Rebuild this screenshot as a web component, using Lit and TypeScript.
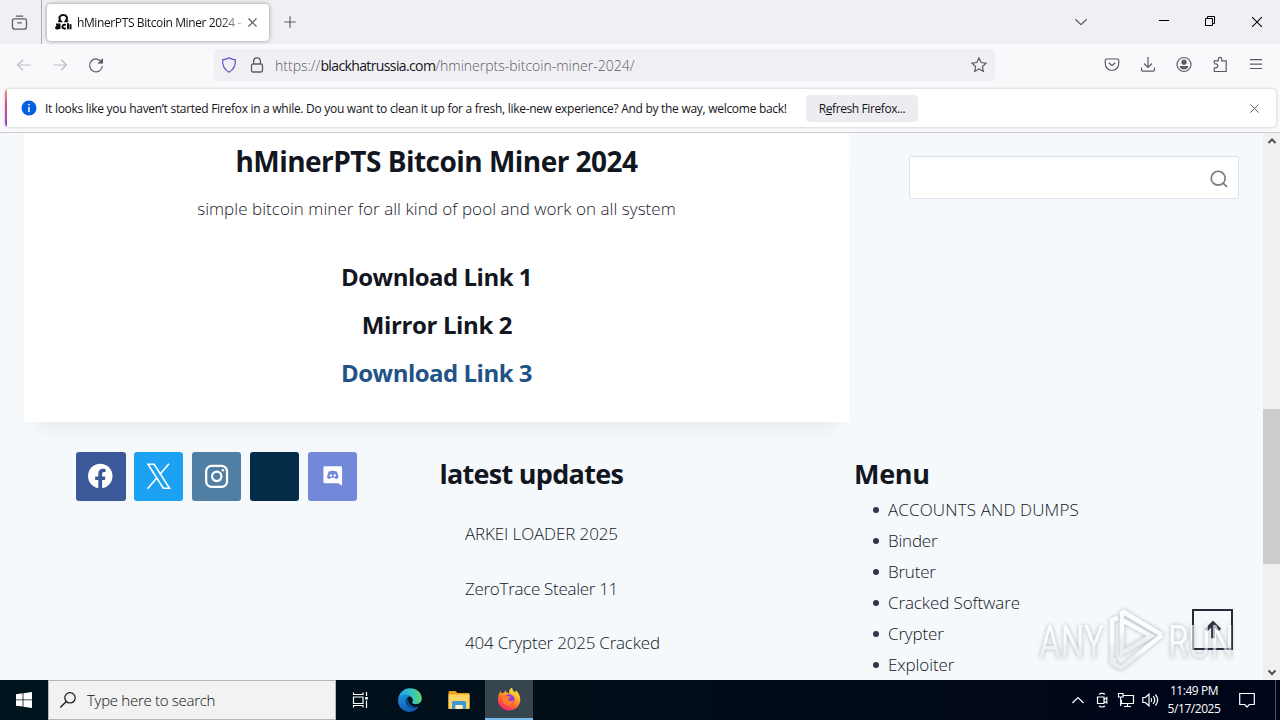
import { LitElement, html, svg, css } from 'lit';
import { customElement, property } from 'lit/decorators.js';

const icons: Record<string, unknown> = {
  view: svg`<path d="M4.5 2h7M3 4.500h10a1.600 1.600 0 0 1 1.600 1.600v5.800a2.300 2.300 0 0 1-2.300 2.300H3.700a2.300 2.300 0 0 1-2.300-2.300V6.100A1.600 1.600 0 0 1 3 4.500zM5.800 8.300h4.400"/>`,
  close: svg`<path d="M3.700 3.700l8.600 8.600M12.300 3.700l-8.600 8.600"/>`,
  plus: svg`<path d="M8 1.500v13M1.500 8h13"/>`,
  chevron: svg`<path d="M2.300 5.300l5.700 5.400 5.700-5.400"/>`,
  minimize: svg`<path d="M3 7.500h10"/>`,
  restore: svg`<path d="M3.500 5.500h7v7h-7zM5.500 5.500v-2h7v7h-2"/>`,
  back: svg`<path d="M1.500 8h13M7 2.700L1.500 8 7 13.300"/>`,
  forward: svg`<path d="M1.500 8h13M9 2.700L14.500 8 9 13.300"/>`,
  reload: svg`<path d="M13.700 5.400A6.400 6.400 0 1 0 14.400 9M14.300 1.800v4.200h-4.200"/><path d="M14.600 1.500v4.800H9.800z" fill="currentColor" stroke="none"/>`,
  shield: svg`<path d="M8 .8C6 2.100 4 2.700 1.600 2.800c-.2 5.400 1.200 9.600 6.400 12.400 5.200-2.800 6.600-7 6.400-12.400C12 2.700 10 2.100 8 .8z"/>`,
  lock: svg`<rect x="2.500" y="7" width="11" height="8" rx="1.500"/><path d="M4.600 7V4.300a3.400 3.400 0 0 1 6.800 0V7"/>`,
  star: svg`<path d="M8 1l2.100 4.500 4.900.6-3.600 3.400.9 4.900L8 12l-4.300 2.400.9-4.900L1 6.100l4.900-.6z"/>`,
  pocket: svg`<path d="M2.500 2h11a1.200 1.200 0 0 1 1.200 1.200v3.600a6.700 6.700 0 0 1-13.400 0V3.200A1.200 1.200 0 0 1 2.500 2zM4.800 5.800L8 8.800l3.200-3"/>`,
  download: svg`<path d="M8 0v10.300M4 6.500l4 4 4-4M1.500 10.500v2a1.700 1.700 0 0 0 1.700 1.700h9.600a1.700 1.700 0 0 0 1.700-1.700v-2"/>`,
  account: svg`<circle cx="8" cy="7.500" r="7"/><circle cx="8" cy="5.200" r="2.600" fill="currentColor" stroke="none"/><path d="M3.700 9h8.600c0 2-1.800 3.500-4.300 3.500S3.700 11 3.700 9z" fill="currentColor" stroke="none"/>`,
  puzzle: svg`<path d="M2.300 6.300V3.800h4V2a1.700 1.700 0 0 1 3.400 0v1.800h4.500v10.700H2.300v-3.700h1.500a1.900 1.900 0 0 0 0-3.900H2.300"/>`,
  menu: svg`<path d="M2 2.700h12M2 7.100h12M2 11.500h12"/>`,
  search: svg`<circle cx="7.300" cy="7.300" r="6.200"/><path d="M11.700 11.700L15 15"/>`,
  lens: svg`<circle cx="10" cy="5.800" r="5.200"/><path d="M6.200 9.500L.3 15.500"/>`,
  up: svg`<path d="M8 14.500V3M2.500 8L8 2.500 13.500 8"/>`,
  scrollUp: svg`<path d="M4.500 10L8 6.500l3.500 3.500"/>`,
  scrollDown: svg`<path d="M4.500 6.500L8 10l3.500-3.500"/>`,
  caret: svg`<path d="M2.500 11L8 5.500l5.500 5.500"/>`,
  camera: svg`<path d="M3.500 5h6.500v6.500H3.500zM10 7.500l2.800-1.800v5.200L10 9.200M5 2.400C6.500 1 9.500 1 11 2.400M5 14c1.500 1.300 4.500 1.300 6 0"/>`,
  network: svg`<path d="M5 3.500h10.500v8H3.500V8M9.500 11.500v3M6 14.500h7M.5 1.500h4.500v3.500H.5zM2.700 5v9"/>`,
  sound: svg`<path d="M.8 5.500h2.500L7 2.200v11.600l-3.700-3.300H.8zM9 6c.9 1.200.9 2.800 0 4M11.200 4.200c1.900 2.300 1.900 5.300 0 7.600M13.400 2.500c2.800 3.400 2.800 7.600 0 11"/>`,
  notes: svg`<path d="M.7 1.500h14.600v11h-5L8 15l-2.300-2.500h-5z"/>`,
  taskview: svg`<path d="M1.500.5v2h9.500v-2M1.500 5h9.500v6.500H1.500zM1.500 15.500v-2h9.500v2M14.500 0v4M14.500 8.500V16"/><path d="M13.200 5h2.600v2.500h-2.600z" fill="currentColor" stroke="none"/>`,
};

@customElement('line-icon')
export class LineIcon extends LitElement {
  @property() name = '';
  @property({ type: Number }) size = 16;
  @property({ type: Number }) weight = 1.2;

  static styles = css`
    :host {
      display: block;
      flex: none;
    }

    svg {
      display: block;
      fill: none;
      stroke: currentColor;
      overflow: visible;
    }
  `;

  render() {
    return html`
      <svg width=${this.size} height=${this.size} viewBox="0 0 16 16" stroke-width=${this.weight}>${icons[this.name]}</svg>
    `;
  }
}

@customElement('browser-chrome')
export class BrowserChrome extends LitElement {
  static styles = css`
    :host {
      display: block;
      height: 133px;
      box-sizing: border-box;
      border-bottom: 1px solid #cccccf;
      background: #f9f9fb;
      font-family: 'Open Sans', 'Noto Sans', sans-serif;
      color: #15141a;
      white-space: nowrap;
    }

    line-icon {
      color: #5b5b66;
    }

    .tabs {
      display: flex;
      align-items: center;
      height: 44px;
      background: #f0f0f4;
    }

    .view {
      display: flex;
      align-items: center;
      width: 42px;
      height: 44px;
      padding-left: 11px;
      box-sizing: border-box;
      border-right: 1px solid #a9a9b0;
    }

    .tab {
      display: flex;
      align-items: center;
      width: 222px;
      height: 37px;
      margin-left: 5px;
      padding: 0 9px 0 8px;
      box-sizing: border-box;
      border-radius: 4px;
      background: #fff;
      box-shadow: 0 0 4px rgba(0, 0, 0, 0.4);
    }

    .favicon {
      display: block;
      width: 17px;
      height: 17px;
      margin-right: 5px;
    }

    .title {
      width: 168px;
      font-size: 12px;
      letter-spacing: -0.39px;
      line-height: 20px;
      padding-top: 1px;
      -webkit-mask-image: linear-gradient(to right, #000 84%, transparent 103%);
    }

    .new {
      margin-left: 14px;
    }

    .spacer {
      flex: 1;
    }

    .window {
      display: flex;
      gap: 30px;
      padding: 0 14px 0 67px;
    }

    .window line-icon {
      color: #000;
    }

    .toolbar {
      display: flex;
      align-items: center;
      height: 42px;
      padding-left: 16px;
    }

    .nav {
      display: flex;
      gap: 20px;
      width: 198px;
    }

    .nav .disabled {
      color: #bcbcc4;
    }

    .url {
      display: flex;
      align-items: center;
      width: 781px;
      height: 32px;
      padding: 0 8px 0 7px;
      box-sizing: border-box;
      border-radius: 4px;
      background: #f0f0f4;
    }

    .url .shield {
      color: #5b55c4;
      margin-right: 12px;
    }

    .address {
      flex: 1;
      padding-left: 10px;
      font-size: 14px;
      font-weight: 300;
      color: #5b5b66;
    }

    .host {
      font-weight: 400;
      letter-spacing: -0.62px;
      color: #15141a;
    }

    .tools {
      display: flex;
      gap: 20px;
      padding-left: 109px;
    }

    .notice {
      display: flex;
      align-items: center;
      width: 1271px;
      height: 38px;
      margin: 3px 0 0 5px;
      padding-right: 14px;
      box-sizing: border-box;
      border-radius: 4px;
      overflow: hidden;
      background: #fff;
      box-shadow: 0 0 3px rgba(0, 0, 0, 0.25);
      font-size: 12px;
    }

    .stripe {
      align-self: stretch;
      width: 2px;
      background: linear-gradient(#f59a5f, #d5468c 45%, #8a4fc6);
    }

    .info {
      display: block;
      width: 16px;
      height: 16px;
      margin: 0 8px 0 14px;
    }

    .message {
      width: 761px;
      letter-spacing: -0.284px;
    }

    .button {
      width: 112px;
      height: 27px;
      border-radius: 4px;
      background: #ededf1;
      letter-spacing: -0.4px;
      line-height: 28px;
      text-align: center;
    }

    u {
      text-underline-offset: 1px;
    }
  `;

  render() {
    return html`
      <div class="tabs">
        <div class="view"><line-icon name="view" size="17"></line-icon></div>
        <div class="tab">
          <svg class="favicon" viewBox="0 0 17 17" fill="none" stroke="#0c0c0d">
            <path d="M3.200 7.300h2.600c-3-3.500-.6-6.300 2.400-6.300s5.400 2.800 2.400 6.300h2.600" stroke-width="2"/>
            <path d="M1 10.500h3.500v4.500M4.500 12.300c-4-.3-4.300 2.500-1.800 2.300l1.800-.7M10.800 11c-4.500-1.500-4.500 4.800 0 3.200M13 9.200v6M15.500 10.200v5" stroke-width="2"/>
          </svg>
          <div class="title">hMinerPTS Bitcoin Miner 2024 -</div>
          <line-icon name="close" size="15" weight="1.300"></line-icon>
        </div>
        <line-icon class="new" name="plus" size="14" weight="1.300"></line-icon>
        <div class="spacer"></div>
        <line-icon name="chevron"></line-icon>
        <div class="window">
          <line-icon name="minimize" weight="1"></line-icon>
          <line-icon name="restore" weight="1"></line-icon>
          <line-icon name="close" size="18" weight="0.900"></line-icon>
        </div>
      </div>
      <div class="toolbar">
        <div class="nav">
          <line-icon class="disabled" name="back"></line-icon>
          <line-icon class="disabled" name="forward"></line-icon>
          <line-icon name="reload"></line-icon>
        </div>
        <div class="url">
          <line-icon class="shield" name="shield"></line-icon>
          <line-icon name="lock" weight="1.300"></line-icon>
          <div class="address">https://<span class="host">blackhatrussia.com</span>/hminerpts-bitcoin-miner-2024/</div>
          <line-icon name="star"></line-icon>
        </div>
        <div class="tools">
          ${['pocket', 'download', 'account', 'puzzle', 'menu'].map(name => html`<line-icon name=${name}></line-icon>`)}
        </div>
      </div>
      <div class="notice">
        <div class="stripe"></div>
        <svg class="info" viewBox="0 0 16 16">
          <circle cx="8" cy="8" r="7.500" fill="#0061e0"/>
          <path d="M8 7v5M8 4v1.500" stroke="#fff" stroke-width="1.500"/>
        </svg>
        <div class="message">It looks like you haven’t started Firefox in a while. Do you want to clean it up for a fresh, like-new experience? And by the way, welcome back!</div>
        <div class="button">R<u>e</u>fresh Firefox...</div>
        <div class="spacer"></div>
        <line-icon name="close" size="15" weight="1"></line-icon>
      </div>
    `;
  }
}

@customElement('site-page')
export class SitePage extends LitElement {
  // [text, letter-spacing]
  private _updates: [string, number][] = [
    ['ARKEI LOADER 2025', -0.12],
    ['ZeroTrace Stealer 11', -0.3],
    ['404 Crypter 2025 Cracked', -0.21],
  ];

  private _menu: [string, number][] = [
    ['ACCOUNTS AND DUMPS', 0.14],
    ['Binder', -0.2],
    ['Bruter', -0.2],
    ['Cracked Software', -0.11],
    ['Crypter', -0.15],
    ['Exploiter', -0.12],
  ];

  static styles = css`
    :host {
      display: flex;
      height: 547px;
      overflow: hidden;
      background: #f5f9fc;
      font-family: 'Open Sans', 'Noto Sans', sans-serif;
      color: #12161f;
      white-space: nowrap;
    }

    .view {
      position: relative;
      width: 1263px;
    }

    .top {
      display: flex;
      align-items: flex-start;
      padding-left: 24px;
    }

    .card {
      width: 825px;
      height: 289px;
      padding-top: 8px;
      box-sizing: border-box;
      background: #fff;
      box-shadow: 0 18px 18px -13px rgba(0, 0, 0, 0.07);
      text-align: center;
    }

    h1,
    h2,
    h3,
    p,
    ul {
      margin: 0;
      padding: 0;
    }

    h1 {
      font-size: 28px;
      letter-spacing: -0.53px;
      line-height: 40px;
    }

    p {
      margin: 13px 0 29px;
      font-size: 17px;
      font-weight: 300;
      letter-spacing: 0.045px;
      line-height: 30px;
      color: #1a202c;
    }

    h2 {
      font-size: 24px;
      letter-spacing: -0.5px;
      line-height: 48px;
    }

    h2.mirror {
      padding-left: 1px;
      letter-spacing: -0.38px;
    }

    h2.link {
      color: #215387;
    }

    .search {
      display: flex;
      align-items: center;
      justify-content: flex-end;
      width: 330px;
      height: 43px;
      margin: 23px 0 0 60px;
      padding: 3px 10px 0 0;
      box-sizing: border-box;
      border: 1px solid #dbe3ec;
      border-radius: 2px;
      background: #fff;
      color: #7b7b80;
    }

    .footer {
      display: grid;
      grid-template-columns: 363.500px 414.500px 1fr;
      padding: 30px 0 0 76px;
    }

    .social {
      display: flex;
      gap: 8.400px;
    }

    .social svg {
      display: block;
      width: 49.500px;
      height: 49px;
      border-radius: 3px;
    }

    .facebook {
      background: #3b5998;
    }

    .x {
      background: #1da1f2;
    }

    .instagram {
      background: #517fa4;
    }

    .steam {
      background: #042b47;
    }

    .discord {
      background: #7289da;
    }

    h3 {
      margin-top: 2px;
      font-size: 27px;
      letter-spacing: -0.72px;
      line-height: 40px;
    }

    h3.short {
      letter-spacing: -0.3px;
    }

    ul {
      list-style: none;
      font-size: 17px;
      font-weight: 300;
    }

    .updates {
      padding: 13px 0 0 25.500px;
      line-height: 54.500px;
    }

    .menu {
      line-height: 31px;
    }

    .menu li {
      display: flex;
      align-items: center;
    }

    .menu li::before {
      content: '';
      width: 6px;
      height: 6px;
      margin: 1px 9px 0 19px;
      border-radius: 50%;
      background: #2d3748;
    }

    .totop {
      position: absolute;
      left: 1192px;
      top: 476px;
      display: flex;
      align-items: center;
      justify-content: center;
      width: 41px;
      height: 41px;
      box-sizing: border-box;
      border: 2px solid #252d3b;
      color: #2d3748;
    }

    .watermark {
      position: absolute;
      left: 1030px;
      top: 467px;
      width: 215px;
      height: 80px;
      overflow: visible;
      font: 400 46px Roboto, 'Open Sans', sans-serif;
      filter: drop-shadow(0 0 2px rgba(60, 70, 80, 0.6));
      opacity: 0.62;
    }

    .scroll {
      display: flex;
      flex-direction: column;
      align-items: center;
      width: 17px;
      background: #f0f0f0;
      color: #505050;
    }

    .track {
      flex: 1;
      width: 17px;
    }

    .thumb {
      height: 155px;
      margin-top: 260px;
      background: #cdcdcd;
    }
  `;

  render() {
    return html`
      <div class="view">
        <div class="top">
          <div class="card">
            <h1>hMinerPTS Bitcoin Miner 2024</h1>
            <p>simple bitcoin miner for all kind of pool and work on all system</p>
            <h2>Download Link 1</h2>
            <h2 class="mirror">Mirror Link 2</h2>
            <h2 class="link">Download Link 3</h2>
          </div>
          <div class="search"><line-icon name="search" size="18" weight="1.500"></line-icon></div>
        </div>
        <div class="footer">
          <div class="social">
            <svg class="facebook" viewBox="0 0 50 50">
              <circle cx="24.500" cy="24.500" r="12.500" fill="#fff"/>
              <path d="M22.500 38V28.500h-3.200v-3.600h3.200v-2.800c0-3.300 2-5 4.900-5 1.300 0 2.500.2 2.500.2v3h-1.500c-1.600 0-2 1-2 1.900v2.700h3.400l-.6 3.600h-2.800V38z" fill="#3b5998"/>
            </svg>
            <svg class="x" viewBox="0 0 50 50" fill="none" stroke="#fff">
              <path d="M14 12.500h6.300L36 37h-6.300z" stroke-width="1.600"/>
              <path d="M35.500 12L26 23M23 26.500L13.500 37.500" stroke-width="1.700"/>
            </svg>
            <svg class="instagram" viewBox="0 0 50 50" fill="none" stroke="#fff" stroke-width="2.300">
              <rect x="14.200" y="14.200" width="21.300" height="21.300" rx="5.500"/>
              <circle cx="25" cy="24.800" r="4.800"/>
              <circle cx="31.300" cy="18.700" r="1.300" fill="#fff" stroke="none"/>
            </svg>
            <svg class="steam" viewBox="0 0 50 50"></svg>
            <svg class="discord" viewBox="0 0 50 50">
              <path d="M17 14.500h16a1.500 1.500 0 0 1 1.500 1.500v18.500l-3.800-2.500H17a1.500 1.500 0 0 1-1.500-1.500V16a1.500 1.500 0 0 1 1.500-1.500z" fill="#fff"/>
              <path d="M21 20c2.500-1 5.500-1 8 0 1.400 2 1.700 4.500 1.700 6.500-1 .9-2 1-2.700 1l-1-1.200h-4l-1 1.200c-1 0-2-.3-2.700-1 0-2 .4-4.500 1.700-6.500z" fill="#7289da"/>
              <circle cx="23" cy="24" r="1.200" fill="#fff"/>
              <circle cx="27" cy="24" r="1.200" fill="#fff"/>
            </svg>
          </div>
          <div>
            <h3>latest updates</h3>
            <ul class="updates">
              ${this._updates.map(([text, spacing]) => html`<li style="letter-spacing:${spacing}px">${text}</li>`)}
            </ul>
          </div>
          <div>
            <h3 class="short">Menu</h3>
            <ul class="menu">
              ${this._menu.map(([text, spacing]) => html`<li style="letter-spacing:${spacing}px">${text}</li>`)}
            </ul>
          </div>
        </div>
        <div class="totop"><line-icon name="up" size="20" weight="3"></line-icon></div>
        <svg class="watermark" viewBox="0 0 215 80">
          <defs>
            <linearGradient id="fade" x1="0" y1="0" x2="0" y2="1">
              <stop offset="0.450" stop-color="#fff"/>
              <stop offset="0.700" stop-color="#e4e8eb"/>
            </linearGradient>
          </defs>
          <g fill="url(#fade)">
            <text x="9" y="58" textLength="65" lengthAdjust="spacingAndGlyphs">ANY</text>
            <text x="138" y="58" textLength="66" lengthAdjust="spacingAndGlyphs">RUN</text>
          </g>
          <g fill="none" stroke="url(#fade)" stroke-width="4.500">
            <path d="M82 65V20l6-2"/>
            <path d="M92 11l40 24M92 11v42l29-17-29-16"/>
            <path d="M132 35L91 68l-7-4 0-6"/>
          </g>
        </svg>
      </div>
      <div class="scroll">
        <line-icon name="scrollUp" weight="2"></line-icon>
        <div class="track"><div class="thumb"></div></div>
        <line-icon name="scrollDown" weight="2"></line-icon>
      </div>
    `;
  }
}

@customElement('task-bar')
export class TaskBar extends LitElement {
  static styles = css`
    :host {
      display: flex;
      height: 40px;
      background: linear-gradient(to right, #00161f, #010d18 50%, #00051a);
      font-family: 'Open Sans', 'Noto Sans', sans-serif;
      color: #fff;
      white-space: nowrap;
    }

    .cell {
      display: flex;
      align-items: center;
      justify-content: center;
      width: 49px;
      box-sizing: border-box;
    }

    .start {
      width: 48px;
    }

    .view {
      padding-right: 2px;
    }

    .active {
      width: 48px;
      margin-left: 2px;
      border-bottom: 2px solid #76b9ed;
      background: #36454e;
    }

    .search {
      display: flex;
      align-items: center;
      gap: 11px;
      width: 288px;
      padding-left: 11px;
      box-sizing: border-box;
      border: 1px solid #b5b8ba;
      background: #f2f2f2;
      color: #111;
      font-size: 15px;
      font-weight: 300;
      letter-spacing: -0.29px;
    }

    svg {
      display: block;
    }

    .spacer {
      flex: 1;
    }

    .tray {
      display: flex;
      align-items: center;
      gap: 8px;
    }

    .clock {
      width: 54px;
      margin: 0 18px 0 9px;
      padding-top: 2px;
      box-sizing: border-box;
      font-size: 12px;
      letter-spacing: -0.45px;
      line-height: 18px;
      text-align: center;
    }

    .peek {
      width: 4px;
      margin-left: 20px;
      border-left: 1px solid #44505a;
    }
  `;

  render() {
    return html`
      <div class="cell start">
        <svg width="16" height="16" viewBox="0 0 16 16" fill="#fff">
          <path d="M0 2.200l6.600-.9v6.200H0zM7.400 1.200L16 0v7.500H7.400zM0 8.300h6.600v6.200L0 13.700zM7.400 8.300H16V16l-8.600-1.300z"/>
        </svg>
      </div>
      <div class="search"><line-icon name="lens" weight="1.200"></line-icon><span>Type here to search</span></div>
      <div class="cell view"><line-icon name="taskview" weight="1.200"></line-icon></div>
      <div class="cell">
        <svg width="24" height="24" viewBox="0 0 24 24">
          <defs>
            <linearGradient id="wave" x1="0" y1="0.400" x2="1" y2="0.300">
              <stop offset="0" stop-color="#1aa5e8"/>
              <stop offset="0.600" stop-color="#35c3c0"/>
              <stop offset="1" stop-color="#69dd5a"/>
            </linearGradient>
            <linearGradient id="deep" x1="0" y1="0" x2="0.400" y2="1">
              <stop offset="0" stop-color="#1b94e0"/>
              <stop offset="1" stop-color="#0e5cb4"/>
            </linearGradient>
          </defs>
          <path d="M.2 11.500C.8 5 5.700.2 12 .2c6.800 0 11.800 4.800 11.800 10.300 0 3.300-2.600 5.700-5.900 5.700-2.500 0-4.300-.9-3.600-2 1-1.300 1-4.300-2.800-6.100C7.500 6.300 2 7.300.2 11.500z" fill="url(#wave)"/>
          <path d="M.1 12C.8 8.500 4 6.400 7.500 6.500c2.300 0 4 .8 5 1.700-3 .3-4.700 3-4.500 5.500.3 4.300 5 7.800 12.500 4.900-2 3.500-5 5.300-8.700 5.300C5 23.900-.5 18.500.1 12z" fill="url(#deep)"/>
          <path d="M9 10.500c-2.500 5.500 1.500 12.500 11.500 8-4 .8-8.500-.7-9.800-5-.3-1-.8-2.200-1.700-3z" fill="#114a8b"/>
        </svg>
      </div>
      <div class="cell">
        <svg width="22" height="20" viewBox="0 0 22 20">
          <path d="M.5 2a1 1 0 0 1 1-1h6l2 2h11a1 1 0 0 1 1 1v14H.5z" fill="#e8a317"/>
          <path d="M.5 4.500h21V19H.5z" fill="#fbd667"/>
          <path d="M4 19v-6.500a1.500 1.500 0 0 1 1.500-1.500h11a1.500 1.500 0 0 1 1.500 1.500V19h-3.500v-4h-7v4z" fill="#3f97d3"/>
          <path d="M7.500 15h7v4h-7z" fill="#fff0b8"/>
        </svg>
      </div>
      <div class="cell active">
        <svg width="24" height="24" viewBox="0 0 24 24">
          <defs>
            <linearGradient id="flame" x1="0.800" y1="0" x2="0.200" y2="1">
              <stop offset="0.100" stop-color="#ffe23c"/>
              <stop offset="0.450" stop-color="#ff9324"/>
              <stop offset="0.750" stop-color="#ff4a41"/>
              <stop offset="1" stop-color="#e8207f"/>
            </linearGradient>
          </defs>
          <path d="M3.500 4c.2 1 .5 1.700 1.200 2.300L7 5.800 8.500 3.200l1 2.300c1.300.3 2 .8 2.700 1.300C11.500 4 13 1.500 15.200.5c0 2.500 1.300 3.500 3 5l.7-2.200c3.500 3.200 4.800 7.200 4.300 10.700-.8 5.500-5.400 9.500-11 9.500C6 23.500 1 18.800 1 12.700 1 9 2.100 6 3.500 4z" fill="url(#flame)"/>
          <circle cx="12.300" cy="12.600" r="5.300" fill="#8a3ce0"/>
          <path d="M5 9.500c2-1.500 4.300-1.300 6-.5 1.500.6 2.500.7 3 .8-.5 1.300-2 1.500-3 2 .7 2.600 4 2.800 6 .9-.5 4-3 5.800-5.700 5.800-3.300 0-6.300-3.200-6.300-9z" fill="#ff7a2e"/>
        </svg>
      </div>
      <div class="spacer"></div>
      <div class="tray">
        ${['caret', 'camera', 'network', 'sound'].map(name => html`<line-icon name=${name} weight="1.200"></line-icon>`)}
      </div>
      <div class="clock">11:49 PM<br>5/17/2025</div>
      <div class="tray"><line-icon name="notes" weight="1.200"></line-icon></div>
      <div class="peek"></div>
    `;
  }
}

@customElement('app-root')
export class AppRoot extends LitElement {
  static styles = css`
    :host {
      display: block;
      width: 1280px;
      height: 720px;
      overflow: hidden;
    }
  `;

  render() {
    return html`
      <browser-chrome></browser-chrome>
      <site-page></site-page>
      <task-bar></task-bar>
    `;
  }
}

declare global {
  interface HTMLElementTagNameMap {
    'app-root': AppRoot;
    'browser-chrome': BrowserChrome;
    'line-icon': LineIcon;
    'site-page': SitePage;
    'task-bar': TaskBar;
  }
}
